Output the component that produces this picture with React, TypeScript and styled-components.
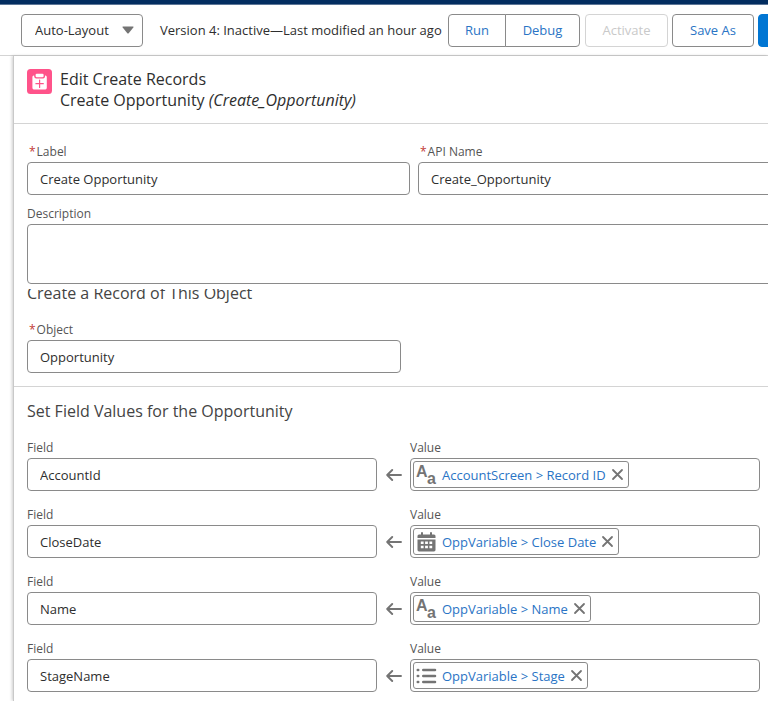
import React, { useId } from "react";
import styled, { createGlobalStyle, css } from "styled-components";

const color = {
  navy: "#032d60",
  border: "#8a8a8a",
  line: "#d4d4d4",
  text: "#2e2e2e",
  label: "#555555",
  link: "#2a74c5",
  blue: "#0176d3",
  icon: "#747474",
};

const GlobalStyle = createGlobalStyle`
  *, *::before, *::after { box-sizing: border-box; }
  body {
    margin: 0;
    background: #ffffff;
    color: ${color.text};
    font-family: "Open Sans", "Noto Sans", sans-serif;
    font-size: 13px;
    line-height: 20px;
    overflow: hidden;
  }
  button, input, select, textarea { font: inherit; color: inherit; margin: 0; }
`;

const Page = styled.div`
  display: flex;
  flex-direction: column;
  min-height: 100vh;
  overflow: hidden;
`;

const TopBar = styled.div`
  height: 5px;
  background: ${color.navy};
  border-bottom: 1px solid #5d7697;
`;

const Toolbar = styled.header`
  display: flex;
  align-items: center;
  height: 51px;
  padding-left: 21px;
  border-bottom: 1px solid ${color.line};
  white-space: nowrap;
`;

const control = css`
  height: 33px;
  border: 1px solid ${color.border};
  border-radius: 4px;
  background: #ffffff;
`;

const LayoutPicker = styled.label`
  display: grid;
  flex: none;
  width: 122px;
  align-items: center;

  & > * { grid-area: 1 / 1; }
  & > svg { justify-self: end; margin-right: 9px; pointer-events: none; }
`;

const Select = styled.select`
  ${control}
  width: 100%;
  padding: 0 13px;
  appearance: none;
`;

const Version = styled.span`
  flex: none;
  width: 288px;
  margin-left: 17px;
`;

const ToolButton = styled.button<{ $width: number }>`
  ${control}
  flex: none;
  width: ${(p) => p.$width}px;
  padding: 0;
  color: ${color.link};
  cursor: pointer;

  &:disabled {
    color: #c9c9c9;
    border-color: #d4d4d4;
    cursor: default;
  }
`;

const ButtonGroup = styled.div`
  display: flex;
  flex: none;
  margin-right: 5px;

  & > :first-child { border-radius: 4px 0 0 4px; }
  & > :last-child { border-radius: 0 4px 4px 0; margin-left: -1px; }
`;

const ButtonList = styled.div`
  display: flex;
  gap: 4px;
`;

const SaveButton = styled(ToolButton)`
  background: ${color.blue};
  border-color: ${color.blue};
  color: #ffffff;
`;

const Panel = styled.main`
  flex: 1;
  margin-left: 13px;
  border-left: 1px solid #c9c9c9;
  box-shadow: -1px 0 3px rgba(0, 0, 0, 0.2);
`;

const PanelHeader = styled.div`
  display: flex;
  gap: 8px;
  height: 68px;
  padding: 13px;
  border-bottom: 1px solid ${color.line};
`;

const Title = styled.h1`
  margin: 0;
  font-size: 16px;
  font-weight: 400;
  line-height: 21px;

  & > span { display: block; }
`;

const Section = styled.section`
  padding: 18px 8px 13px 13px;
  border-bottom: 1px solid ${color.line};
`;

const NameGrid = styled.div`
  display: grid;
  grid-template-columns: 1fr 1fr;
  gap: 8px;
  margin-right: -41px;
`;

const Field = styled.div<{ $half?: boolean }>`
  display: flex;
  flex-direction: column;
  width: ${(p) => (p.$half ? "51%" : "auto")};
  min-width: 0;
`;

const FieldLabel = styled.label`
  height: 20px;
  color: ${color.label};
  font-size: 12px;
`;

const Required = styled.span`
  padding: 0 1px 0 2px;
  color: #c23934;
`;

const TextInput = styled.input`
  ${control}
  width: 100%;
  padding: 0 12px;
`;

const DescriptionField = styled(Field)`
  margin-top: 9px;
  margin-right: -41px;
`;

const TextArea = styled.textarea`
  ${control}
  height: 60px;
  padding: 8px 12px;
  resize: none;
`;

const Heading = styled.h2`
  margin: 0 0 17px;
  color: #444444;
  font-size: 16px;
  font-weight: 400;
  line-height: 20px;
`;

const ScrolledHeading = styled(Heading)`
  display: flex;
  align-items: flex-end;
  height: 15px;
  margin: 5px 0 16px;
  overflow: hidden;
  line-height: 22px;
`;

const Assignments = styled.section`
  display: flex;
  flex-direction: column;
  padding: 14px 8px 8px 13px;
`;

const AssignmentList = styled.div`
  display: grid;
  gap: 14px;
`;

const Assignment = styled.div`
  display: grid;
  grid-template-columns: 1fr 33px 1fr;
  align-items: end;
`;

const ArrowCell = styled.div`
  display: flex;
  align-items: center;
  justify-content: center;
  height: 33px;
`;

const ValueBox = styled.div`
  ${control}
  display: flex;
  align-items: center;
  padding: 0 2px;
`;

const Pill = styled.span`
  display: flex;
  flex: none;
  align-items: center;
  height: 27px;
  padding: 0 3px;
  border: 1px solid ${color.border};
  border-radius: 3px;

  & svg { overflow: visible; }
`;

const PillLink = styled.a`
  margin: 0 4px 0 5px;
  color: ${color.link};
  text-decoration: none;
  white-space: nowrap;
`;

const RemoveButton = styled.button`
  display: flex;
  padding: 2px;
  border: 0;
  background: none;
  cursor: pointer;
`;

const ValueInput = styled.input`
  flex: 1;
  min-width: 0;
  height: 28px;
  border: 0;
  outline: 0;
  background: none;
`;

const Caret = () => (
  <svg width="12" height="8" viewBox="0 0 12 8" aria-hidden="true">
    <path d="M1 0.5H11Q12 0.5 11.3 1.4L6.7 7.2Q6 8 5.3 7.2L0.7 1.4Q0 0.5 1 0.5Z" fill={color.icon} />
  </svg>
);

const RecordIcon = () => (
  <svg width="25" height="25" viewBox="0 0 25 25" aria-hidden="true">
    <rect width="25" height="25" rx="3.5" fill="#ff538a" />
    <rect x="8.6" y="4.8" width="8" height="3.4" rx="1.2" fill="#ffffff" />
    <path
      d="M6.8 6.4H7.2V7.6Q7.2 9.4 8.9 9.4H16.3Q18 9.4 18 7.6V6.4H18.4Q19.8 6.4 19.8 8V18.8Q19.8 20.4 18.4 20.4H6.8Q5.4 20.4 5.4 18.8V8Q5.4 6.4 6.8 6.4Z"
      fill="#ffffff"
    />
    <path d="M12.6 11V18.4M8.9 14.7H16.3" stroke="#ff538a" strokeWidth="1.2" strokeLinecap="round" />
  </svg>
);

const ArrowLeftIcon = () => (
  <svg width="16" height="14" viewBox="0 0 16 14" fill="none" stroke={color.icon} strokeWidth="1.9" strokeLinecap="round" strokeLinejoin="round" aria-hidden="true">
    <path d="M15 7H1.4M6.2 2L1.2 7L6.2 12" />
  </svg>
);

const CloseIcon = () => (
  <svg width="11" height="11" viewBox="0 0 11 11" stroke={color.icon} strokeWidth="1.8" strokeLinecap="round" aria-hidden="true">
    <path d="M1 1L10 10M10 1L1 10" />
  </svg>
);

const TypeText = styled.text`
  font-family: "Liberation Sans", sans-serif;
  font-size: 16px;
  font-weight: 700;
  fill: ${color.icon};
`;

const TextIcon = () => (
  <svg width="20" height="20" viewBox="0 0 20 20" aria-hidden="true">
    <TypeText x="-1" y="12">A</TypeText>
    <TypeText x="10" y="19">a</TypeText>
  </svg>
);

const CalendarIcon = () => (
  <svg width="20" height="20" viewBox="0 0 20 20" aria-hidden="true">
    <path d="M5 1V4M14 1V4" stroke={color.icon} strokeWidth="2" strokeLinecap="round" />
    <path d="M0.5 4Q0.5 2.5 2 2.5H17Q18.5 2.5 18.5 4V6H0.5Z" fill={color.icon} />
    <path
      fillRule="evenodd"
      fill={color.icon}
      d="M0.5 7.4H18.5V18Q18.5 19.4 17 19.4H2Q0.5 19.4 0.5 18ZM3.8 9.6V12H6.6V9.6ZM8.1 9.6V12H10.9V9.6ZM12.4 9.6V12H15.2V9.6ZM3.8 13.8V16.2H6.6V13.8ZM8.1 13.8V16.2H10.9V13.8ZM12.4 13.8V16.2H15.2V13.8Z"
    />
  </svg>
);

const ListIcon = () => (
  <svg width="20" height="20" viewBox="0 0 20 20" stroke={color.icon} strokeWidth="2.6" strokeLinecap="round" aria-hidden="true">
    <path d="M0.8 4H1.2M0.8 10H1.2M0.8 16H1.2M6.3 4H18M6.3 10H18M6.3 16H18" />
  </svg>
);

type Kind = "text" | "date" | "picklist";

const kindIcon: Record<Kind, () => React.JSX.Element> = {
  text: TextIcon,
  date: CalendarIcon,
  picklist: ListIcon,
};

const assignments: { field: string; value: string; kind: Kind }[] = [
  { field: "AccountId", value: "AccountScreen > Record ID", kind: "text" },
  { field: "CloseDate", value: "OppVariable > Close Date", kind: "date" },
  { field: "Name", value: "OppVariable > Name", kind: "text" },
  { field: "StageName", value: "OppVariable > Stage", kind: "picklist" },
];

function LabeledInput({ label, value, required, half }: { label: string; value: string; required?: boolean; half?: boolean }) {
  const id = useId();
  return (
    <Field $half={half}>
      <FieldLabel htmlFor={id}>
        {required && <Required>*</Required>}
        {label}
      </FieldLabel>
      <TextInput id={id} defaultValue={value} required={required} />
    </Field>
  );
}

function AssignmentRow({ field, value, kind }: { field: string; value: string; kind: Kind }) {
  const id = useId();
  const Icon = kindIcon[kind];
  return (
    <Assignment>
      <LabeledInput label="Field" value={field} />
      <ArrowCell>
        <ArrowLeftIcon />
      </ArrowCell>
      <Field>
        <FieldLabel htmlFor={id}>Value</FieldLabel>
        <ValueBox>
          <Pill>
            <Icon />
            <PillLink href="#">{value}</PillLink>
            <RemoveButton type="button" aria-label={`Remove ${value}`}>
              <CloseIcon />
            </RemoveButton>
          </Pill>
          <ValueInput id={id} />
        </ValueBox>
      </Field>
    </Assignment>
  );
}

export default function App() {
  return (
    <Page>
      <GlobalStyle />
      <TopBar />
      <Toolbar>
        <LayoutPicker>
          <Select aria-label="Layout mode" defaultValue="auto">
            <option value="auto">Auto-Layout</option>
            <option value="free">Free-Form</option>
          </Select>
          <Caret />
        </LayoutPicker>
        <Version>Version 4: Inactive—Last modified an hour ago</Version>
        <ButtonGroup>
          <ToolButton type="button" $width={58}>Run</ToolButton>
          <ToolButton type="button" $width={75}>Debug</ToolButton>
        </ButtonGroup>
        <ButtonList>
          <ToolButton type="button" $width={83} disabled>Activate</ToolButton>
          <ToolButton type="button" $width={82}>Save As</ToolButton>
          <SaveButton type="button" $width={64} aria-label="Save" />
        </ButtonList>
      </Toolbar>
      <Panel>
        <PanelHeader>
          <RecordIcon />
          <Title>
            <span>Edit Create Records</span>
            <span>
              Create Opportunity <em>(Create_Opportunity)</em>
            </span>
          </Title>
        </PanelHeader>
        <Section>
          <NameGrid>
            <LabeledInput label="Label" value="Create Opportunity" required />
            <LabeledInput label="API Name" value="Create_Opportunity" required />
          </NameGrid>
          <DescriptionField>
            <FieldLabel htmlFor="description">Description</FieldLabel>
            <TextArea id="description" />
          </DescriptionField>
          <ScrolledHeading>Create a Record of This Object</ScrolledHeading>
          <LabeledInput label="Object" value="Opportunity" required half />
        </Section>
        <Assignments>
          <Heading>Set Field Values for the Opportunity</Heading>
          <AssignmentList>
            {assignments.map((a) => (
              <AssignmentRow key={a.field} {...a} />
            ))}
          </AssignmentList>
        </Assignments>
      </Panel>
    </Page>
  );
}
